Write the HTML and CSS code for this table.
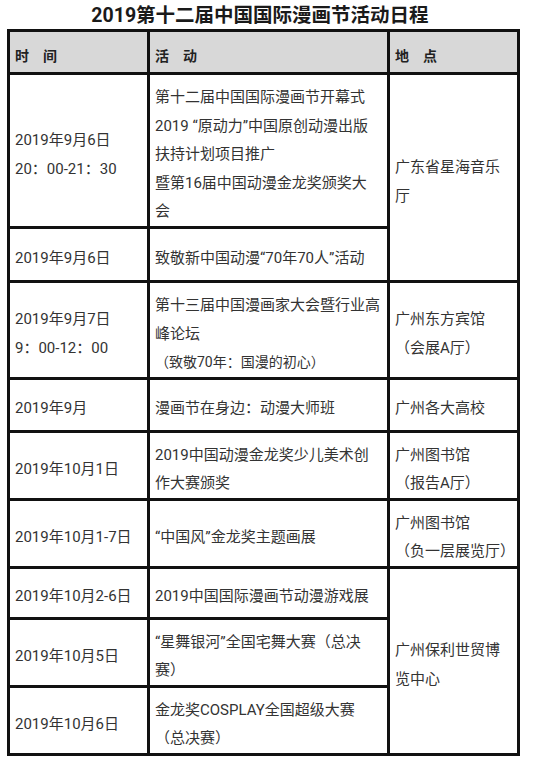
FILE: index.html
```html
<!DOCTYPE html>
<html lang="zh-CN">
<head>
<meta charset="utf-8">
<title>2019第十二届中国国际漫画节活动日程</title>
<link rel="stylesheet" href="styles.css">
</head>
<body>
<div class="page">
  <h1 class="title">2019第十二届中国国际漫画节活动日程</h1>
  <table class="schedule">
    <thead>
      <tr class="r-head">
        <th class="c-time">时　间</th>
        <th class="c-act">活　动</th>
        <th class="c-place">地　点</th>
      </tr>
    </thead>
    <tbody>
      <tr class="r1">
        <td>2019年9月6日<br>20：00-21：30</td>
        <td>第十二届中国国际漫画节开幕式<br>2019 “原动力”中国原创动漫出版<br>扶持计划项目推广<br>暨第16届中国动漫金龙奖颁奖大<br>会</td>
        <td rowspan="2">广东省星海音乐<br>厅</td>
      </tr>
      <tr class="r2">
        <td>2019年9月6日</td>
        <td>致敬新中国动漫“70年70人”活动</td>
      </tr>
      <tr class="r3">
        <td>2019年9月7日<br>9：00-12：00</td>
        <td>第十三届中国漫画家大会暨行业高<br>峰论坛<br><span class="note">（致敬70年：国漫的初心）</span></td>
        <td>广州东方宾馆<br>（会展A厅）</td>
      </tr>
      <tr class="r4">
        <td>2019年9月</td>
        <td>漫画节在身边：动漫大师班</td>
        <td>广州各大高校</td>
      </tr>
      <tr class="r5">
        <td>2019年10月1日</td>
        <td>2019中国动漫金龙奖少儿美术创<br>作大赛颁奖</td>
        <td>广州图书馆<br>（报告A厅）</td>
      </tr>
      <tr class="r6">
        <td>2019年10月1-7日</td>
        <td>“中国风”金龙奖主题画展</td>
        <td>广州图书馆<br>（负一层展览厅）</td>
      </tr>
      <tr class="r7">
        <td>2019年10月2-6日</td>
        <td>2019中国国际漫画节动漫游戏展</td>
        <td rowspan="3">广州保利世贸博<br>览中心</td>
      </tr>
      <tr class="r8">
        <td>2019年10月5日</td>
        <td>“星舞银河”全国宅舞大赛（总决<br>赛）</td>
      </tr>
      <tr class="r9">
        <td>2019年10月6日</td>
        <td>金龙奖COSPLAY全国超级大赛<br>（总决赛）</td>
      </tr>
    </tbody>
  </table>
  <div class="footer"></div>
</div>
</body>
</html>
```

FILE: styles.css
```css
html, body {
  margin: 0;
  padding: 0;
  background: #ffffff;
}

body {
  font-family: Roboto, "Noto Sans CJK SC", sans-serif;
  color: #333333;
}

.page {
  width: 533px;
  height: 757px;
  overflow: hidden;
}

.title {
  margin: 0 0 0 7px;
  width: 506px;
  padding-top: 3px;
  height: 26px;
  line-height: 26px;
  font-size: 19.5px;
  font-weight: bold;
  color: #1a1a1a;
  text-align: center;
  white-space: nowrap;
}

.schedule {
  margin-left: 7px;
  width: 513px;
  table-layout: fixed;
  border-collapse: separate;
  border-spacing: 0;
  border-top: 3px solid #111;
  border-left: 3px solid #111;
}

.schedule th,
.schedule td {
  box-sizing: border-box;
  border-right: 3px solid #111;
  border-bottom: 3px solid #111;
  padding: 8px 4px 0 5px;
  vertical-align: middle;
  text-align: left;
  font-size: 15px;
  line-height: 28.5px;
  white-space: nowrap;
  overflow: hidden;
}

.schedule th {
  background: #d8d8d8;
  font-size: 14px;
  font-weight: bold;
  color: #222;
  padding-top: 9px;
}

.c-time { width: 140px; }
.c-act { width: 240px; }
.c-place { width: 130px; }

.note {
  font-size: 14px;
}

.r-head { height: 43px; }
.r1 { height: 154px; }
.r2 { height: 54px; }
.r3 { height: 96px; }
.r4 { height: 53px; }
.r5 { height: 65px; }
.r6 { height: 66px; }
.r7 { height: 51px; }
.r8 { height: 68px; }
.r9 { height: 63px; }

.footer {
  margin-top: 6px;
  height: 20px;
  border-top: 1px solid #e8e8e8;
  background: #fafafa;
}
```
